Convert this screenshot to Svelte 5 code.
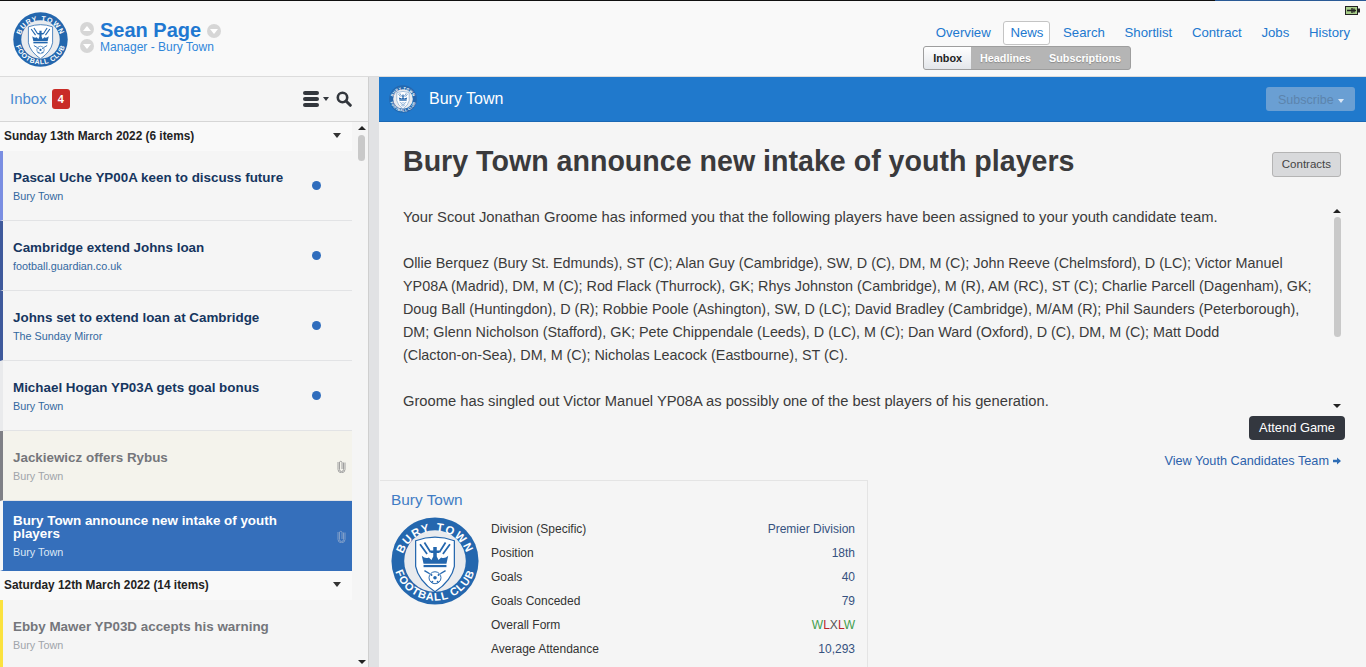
<script>
	const tabs = ['Overview', 'News', 'Search', 'Shortlist', 'Contract', 'Jobs', 'History'];
	const subTabs = ['Inbox', 'Headlines', 'Subscriptions'];

	const sunday = [
		{ title: 'Pascal Uche YP00A keen to discuss future', from: 'Bury Town', edge: '#7a8ee2', dot: true },
		{ title: 'Cambridge extend Johns loan', from: 'football.guardian.co.uk', edge: '#3f5a9c', dot: true },
		{ title: 'Johns set to extend loan at Cambridge', from: 'The Sunday Mirror', edge: '#3f5a9c', dot: true },
		{ title: 'Michael Hogan YP03A gets goal bonus', from: 'Bury Town', edge: '#e9eaec', dot: true },
		{ title: 'Jackiewicz offers Rybus', from: 'Bury Town', edge: '#7f8086', read: true, clip: true, tint: true },
		{ title: 'Bury Town announce new intake of youth players', from: 'Bury Town', edge: '#f7f7f7', selected: true, clip: true }
	];
	const saturday = [
		{ title: 'Ebby Mawer YP03D accepts his warning', from: 'Bury Town', edge: '#fbe23e', read: true }
	];

	const stats = [
		['Division (Specific)', 'Premier Division'],
		['Position', '18th'],
		['Goals', '40'],
		['Goals Conceded', '79'],
		['Overall Form', null],
		['Average Attendance', '10,293']
	];
	const form = [['W', '#3f9e4d'], ['L', '#b8262b'], ['X', '#555'], ['L', '#b8262b'], ['W', '#3f9e4d']];
</script>

{#snippet crest(id, size)}
	<svg class="crest" width={size} height={size} viewBox="0 0 100 100">
		<defs>
			<path id="{id}-top" d="M 12 54 A 38 38 0 0 1 88 54" />
			<path id="{id}-bot" d="M 3 48 A 47 47 0 0 0 97 48" />
		</defs>
		<circle cx="50" cy="50" r="49.5" fill="#2467ae" />
		<circle cx="50" cy="50" r="35" fill="#e9ebee" />
		<text class="ring" font-size="13" letter-spacing="1.8" text-anchor="middle">
			<textPath href="#{id}-top" startOffset="50%">BURY TOWN</textPath>
		</text>
		<text class="ring" font-size="12.5" letter-spacing="1" text-anchor="middle">
			<textPath href="#{id}-bot" startOffset="50%">FOOTBALL CLUB</textPath>
		</text>
		<path d="M28 27 Q50 19 72 27 L72 56 Q69 72 50 85 Q31 72 28 56 Z" fill="#fff" stroke="#2467ae" stroke-width="1.4" />
		<path d="M33 31 L41 42 M38 29 L45 40 M67 31 L59 42 M62 29 L55 40" stroke="#2467ae" stroke-width="2" />
		<path d="M37 53 L35 44 Q39 48 43 46 L46 49 L48 45 V41 H45 V38 H48 V34 H52 V38 H55 V41 H52 V45 L54 49 L57 46 Q61 48 65 44 L63 53 Z" fill="#2467ae" />
		<rect x="37" y="54.5" width="26" height="2.5" fill="#2467ae" />
		<path d="M38 61 L44 64.5 M62 61 L56 64.5" stroke="#2467ae" stroke-width="1.6" />
		<circle cx="50" cy="69" r="6.8" fill="#fff" stroke="#2467ae" stroke-width="1.1" />
		<circle cx="50" cy="69" r="2" fill="#2467ae" />
		<circle cx="46" cy="66" r="1.1" fill="#2467ae" />
		<circle cx="54" cy="66" r="1.1" fill="#2467ae" />
		<circle cx="47" cy="73.5" r="1.1" fill="#2467ae" />
		<circle cx="53" cy="73.5" r="1.1" fill="#2467ae" />
	</svg>
{/snippet}

{#snippet message(m)}
	<div class="item" class:read={m.read} class:tint={m.tint} class:selected={m.selected} style="border-left-color: {m.edge}">
		<div class="item-text">
			<div class="item-title">{m.title}</div>
			<div class="item-from">{m.from}</div>
		</div>
		{#if m.dot}<span class="dot"></span>{/if}
		{#if m.clip}
			<svg class="clip" width="9" height="14" viewBox="0 0 9 14">
				<path d="M6.5 3.5 V10.5 A2 2 0 0 1 2.5 10.5 V3 A1.5 1.5 0 0 1 5 3 V10 " fill="none" stroke="currentColor" stroke-width="1" />
				<path d="M8 3.5 V10.5 A3.5 3.2 0 0 1 1 10.5 V3" fill="none" stroke="currentColor" stroke-width="1" />
			</svg>
		{/if}
	</div>
{/snippet}

<div class="page">
	<div class="topline"></div>
	<header class="top">
		<div class="who">
			{@render crest('hd', 55)}
			<div class="arrows">
				<span class="round up"></span>
				<span class="round down"></span>
			</div>
			<div class="names">
				<div class="name-row">
					<span class="name">Sean Page</span>
					<span class="round down"></span>
				</div>
				<div class="role">Manager - Bury Town</div>
			</div>
		</div>
		<div class="right">
			<svg class="battery" width="15" height="9" viewBox="0 0 15 9">
				<rect x="0.5" y="0.5" width="12" height="8" fill="#a9cf8b" stroke="#222" />
				<rect x="13" y="2.5" width="2" height="4" fill="#222" />
				<path d="M2 4.5 H11 M7 2 V7 M9 2.5 V6.5" stroke="#222" stroke-width="1.4" />
			</svg>
			<nav class="tabs">
				{#each tabs as t}
					<span class="tab" class:active={t === 'News'}>{t}</span>
				{/each}
			</nav>
			<div class="subtabs">
				{#each subTabs as t}
					<span class="subtab" class:on={t === 'Inbox'}>{t}</span>
				{/each}
			</div>
		</div>
	</header>

	<main class="main">
		<aside class="side">
			<div class="side-head">
				<span class="inbox">Inbox</span>
				<span class="badge">4</span>
				<span class="side-tools">
					<span class="burger"><i></i><i></i><i></i></span>
					<span class="caret"></span>
					<svg class="search" width="16" height="16" viewBox="0 0 16 16">
						<circle cx="6.5" cy="6.5" r="4.7" fill="none" stroke="#33373d" stroke-width="2.6" />
						<path d="M10 10 L14.3 14.3" stroke="#33373d" stroke-width="3" stroke-linecap="round" />
					</svg>
				</span>
			</div>
			<div class="list">
				<div class="list-body">
					<div class="date"><span>Sunday 13th March 2022 (6 items)</span><span class="date-caret"></span></div>
					{#each sunday as m}
						{@render message(m)}
					{/each}
					<div class="date"><span>Saturday 12th March 2022 (14 items)</span><span class="date-caret"></span></div>
					{#each saturday as m}
						{@render message(m)}
					{/each}
				</div>
				<div class="bar">
					<span class="arrow-up"></span>
					<span class="thumb"></span>
					<span class="arrow-down"></span>
				</div>
			</div>
		</aside>

		<section class="content">
			<div class="club-bar">
				{@render crest('bar', 28)}
				<span class="club-name">Bury Town</span>
				<span class="subscribe">Subscribe<span class="sub-caret"></span></span>
			</div>
			<div class="article">
				<div class="headline">
					<h1>Bury Town announce new intake of youth players</h1>
					<span class="contracts">Contracts</span>
				</div>
				<div class="body-wrap">
					<div class="body-text">
						<p>Your Scout Jonathan Groome has informed you that the following players have been assigned to your youth candidate team.</p>
						<p class="roster">Ollie Berquez (Bury St. Edmunds), ST (C); Alan Guy (Cambridge), SW, D (C), DM, M (C); John Reeve (Chelmsford), D (LC); Victor Manuel YP08A (Madrid), DM, M (C); Rod Flack (Thurrock), GK; Rhys Johnston (Cambridge), M (R), AM (RC), ST (C); Charlie Parcell (Dagenham), GK; Doug Ball (Huntingdon), D (R); Robbie Poole (Ashington), SW, D (LC); David Bradley (Cambridge), M/AM (R); Phil Saunders (Peterborough), DM; Glenn Nicholson (Stafford), GK; Pete Chippendale (Leeds), D (LC), M (C); Dan Ward (Oxford), D (C), DM, M (C); Matt Dodd <span class="nowrap">(Clacton-on-Sea),</span> DM, M (C); Nicholas Leacock (Eastbourne), ST (C).</p>
						<p class="closing">Groome has singled out Victor Manuel YP08A as possibly one of the best players of his generation.</p>
					</div>
					<div class="text-bar">
						<span class="arrow-up"></span>
						<span class="text-thumb"></span>
						<span class="arrow-down"></span>
					</div>
				</div>
				<div class="actions"><span class="attend">Attend Game</span></div>
				<div class="link-row">
					<span class="view-link">View Youth Candidates Team</span>
					<svg width="8" height="8" viewBox="0 0 8 8"><path d="M0 2.8 H4 V0.5 L8 4 L4 7.5 V5.2 H0 Z" fill="#2f6db5" /></svg>
				</div>
				<div class="card">
					<div class="card-title">Bury Town</div>
					<div class="card-body">
						{@render crest('card', 88)}
						<div class="stats">
							{#each stats as [label, value]}
								<div class="stat">
									<span>{label}</span>
									{#if value}
										<span class="val">{value}</span>
									{:else}
										<span>{#each form as [l, c]}<span style="color: {c}">{l}</span>{/each}</span>
									{/if}
								</div>
							{/each}
						</div>
					</div>
				</div>
			</div>
		</section>
	</main>
</div>

<style>
	:global(body) {
		margin: 0;
		background: #f5f5f5;
		overflow: hidden;
	}
	.page {
		height: 667px;
		overflow: hidden;
		font-family: "Liberation Sans", Arial, sans-serif;
		color: #333;
		background: #f9f9f9;
		display: flex;
		flex-direction: column;
	}
	.topline {
		height: 1px;
		flex: none;
		background: linear-gradient(to right, #111 1215px, #2a5a96 1215px);
	}
	.top {
		height: 75px;
		flex: none;
		display: flex;
		justify-content: space-between;
		border-bottom: 1px solid #dcdcdc;
		box-sizing: content-box;
	}
	.who {
		display: flex;
		align-items: flex-start;
		padding: 11px 0 0 13px;
	}
	.crest {
		display: block;
		flex: none;
	}
	.ring {
		font-family: "Liberation Sans", Arial, sans-serif;
		font-weight: bold;
		fill: #fff;
	}
	.arrows {
		display: flex;
		flex-direction: column;
		gap: 3px;
		margin: 10px 0 0 12px;
	}
	.round {
		display: block;
		width: 14px;
		height: 14px;
		border-radius: 50%;
		background: #d6d6d6;
		position: relative;
	}
	.round::after {
		content: '';
		position: absolute;
		left: 3px;
		border-left: 4px solid transparent;
		border-right: 4px solid transparent;
	}
	.up::after {
		top: 4px;
		border-bottom: 5px solid #fff;
	}
	.down::after {
		top: 5px;
		border-top: 5px solid #fff;
	}
	.names {
		margin: 6px 0 0 6px;
	}
	.name-row {
		display: flex;
		align-items: center;
		gap: 6px;
	}
	.name {
		font-size: 20px;
		line-height: 24px;
		font-weight: bold;
		color: #1f78d1;
	}
	.name-row .round {
		margin-top: 2px;
	}
	.role {
		font-size: 12px;
		line-height: 14px;
		margin-top: -2px;
		color: #2f86d9;
	}
	.right {
		display: flex;
		flex-direction: column;
		align-items: flex-end;
		position: relative;
		padding: 20px 9px 0 0;
	}
	.battery {
		position: absolute;
		top: 5px;
		right: 6px;
	}
	.tabs {
		display: flex;
		gap: 5.7px;
	}
	.tab {
		font-size: 13.2px;
		line-height: 22px;
		padding: 0 6px;
		border: 1px solid transparent;
		border-radius: 3px;
		color: #2178cf;
	}
	.tab.active {
		border-color: #c4c4c4;
		background: #fff;
	}
	.subtabs {
		display: flex;
		align-self: flex-end;
		margin: 1px 226px 0 0;
		background: #b5b5b5;
		border: 1px solid #9e9e9e;
		border-radius: 3px;
	}
	.subtab {
		font-size: 10.8px;
		font-weight: bold;
		line-height: 22px;
		padding: 0 9px;
		color: #fff;
		text-shadow: 0 1px 1px #8a8a8a;
	}
	.subtab.on {
		color: #222;
		text-shadow: none;
		background: linear-gradient(#fff, #e3e6ea);
		border-radius: 2px 0 0 2px;
	}
	.main {
		flex: 1;
		min-height: 0;
		display: flex;
		background: #e1e2e4;
		gap: 10px;
	}
	.side {
		width: 368px;
		flex: none;
		display: flex;
		flex-direction: column;
		background: #f5f5f5;
		border-right: 1px solid #cfcfcf;
	}
	.side-head {
		height: 44px;
		flex: none;
		display: flex;
		align-items: center;
		padding: 0 16px 0 10px;
		border-bottom: 1px solid #d6d6d6;
	}
	.inbox {
		font-size: 15px;
		margin-top: -2px;
		color: #4a8bd2;
	}
	.badge {
		margin-left: 5px;
		width: 18px;
		height: 20px;
		line-height: 20px;
		border-radius: 3px;
		background: #c92c27;
		color: #fff;
		font-size: 11px;
		font-weight: bold;
		text-align: center;
	}
	.side-tools {
		margin-left: auto;
		display: flex;
		align-items: center;
	}
	.burger {
		display: flex;
		flex-direction: column;
		gap: 2px;
		width: 16px;
	}
	.burger i {
		display: block;
		height: 4px;
		border-radius: 2px;
		background: #33373d;
	}
	.caret {
		margin: 0 7px 0 4px;
		border-left: 3.5px solid transparent;
		border-right: 3.5px solid transparent;
		border-top: 4px solid #33373d;
	}
	.list {
		flex: 1;
		min-height: 0;
		display: flex;
		position: relative;
	}
	.list-body {
		width: 352px;
		flex: none;
		overflow: hidden;
	}
	.bar {
		flex: 1;
		display: flex;
		flex-direction: column;
		align-items: center;
		padding: 4px 0 0 3px;
	}
	.thumb {
		width: 7px;
		height: 26px;
		margin-top: 5px;
		border-radius: 4px;
		background: #c9c9c9;
	}
	.arrow-up, .arrow-down {
		display: block;
		width: 0;
		border-left: 4px solid transparent;
		border-right: 4px solid transparent;
	}
	.arrow-up {
		border-bottom: 4px solid #222;
	}
	.arrow-down {
		border-top: 4px solid #222;
		margin-top: auto;
		margin-bottom: 3px;
	}
	.date {
		height: 29px;
		box-sizing: border-box;
		padding: 0 11px 2px 4px;
		display: flex;
		align-items: center;
		justify-content: space-between;
		background: #f9f9f9;
		font-size: 11.85px;
		font-weight: bold;
		color: #222;
	}
	.date-caret {
		border-left: 4px solid transparent;
		border-right: 4px solid transparent;
		border-top: 5px solid #333;
	}
	.item {
		height: 70px;
		box-sizing: border-box;
		display: flex;
		align-items: center;
		padding: 2px 10px 0 10px;
		border-left: 3px solid;
		border-bottom: 1px solid #e2e3e5;
		background: #f5f5f5;
	}
	.item-text {
		flex: 1;
		min-width: 0;
		max-width: 300px;
		margin-right: auto;
	}
	.item-title {
		font-size: 13.4px;
		line-height: 13px;
		font-weight: bold;
		color: #16365f;
	}
	.item-from {
		font-size: 10.8px;
		line-height: 13px;
		margin-top: 6px;
		color: #33689f;
	}
	.dot {
		width: 9px;
		height: 9px;
		flex: none;
		margin: -2px 21px 0 0;
		border-radius: 50%;
		background: #2f6dbd;
	}
	.clip {
		flex: none;
		margin: -2px -4px 0 0;
		color: #a0a0a0;
	}
	.read .item-title {
		color: #74767b;
	}
	.read .item-from {
		color: #a0a4aa;
	}
	.tint {
		background: #f4f3ec;
	}
	.selected {
		background: #356fbb;
		border-bottom-color: #356fbb;
	}
	.selected .item-title {
		color: #fff;
	}
	.selected .item-from {
		color: #dce8f5;
	}
	.selected .clip {
		color: #7f9ec9;
	}
	.content {
		flex: 1;
		min-width: 0;
		display: flex;
		flex-direction: column;
		background: #f5f5f5;
	}
	.club-bar {
		height: 45px;
		flex: none;
		box-sizing: border-box;
		display: flex;
		align-items: center;
		padding: 0 11px 0 10px;
		background: #2079cc;
		border-bottom: 1px solid #1a68b4;
	}
	.club-name {
		margin-left: 12px;
		font-size: 16px;
		color: #fff;
	}
	.subscribe {
		margin-left: auto;
		width: 89px;
		height: 24px;
		line-height: 26px;
		box-sizing: border-box;
		padding-left: 12px;
		border-radius: 3px;
		background: #6a9fd3;
		color: #5c84ad;
		font-size: 12.5px;
	}
	.sub-caret {
		display: inline-block;
		margin-left: 4px;
		vertical-align: middle;
		border-left: 3.5px solid transparent;
		border-right: 3.5px solid transparent;
		border-top: 4px solid #dce8f5;
	}
	.article {
		flex: 1;
		min-height: 0;
		overflow: hidden;
	}
	.headline {
		display: flex;
		justify-content: space-between;
		align-items: center;
		padding: 22px 25px 0 24px;
		height: 62px;
		box-sizing: content-box;
	}
	h1 {
		margin: 0;
		font-size: 28.6px;
		line-height: 34px;
		color: #3a3a3c;
		align-self: flex-start;
	}
	.contracts {
		font-size: 11.5px;
		line-height: 23px;
		padding: 0 9px;
		margin-top: -22px;
		color: #444;
		background: #d8d9db;
		border: 1px solid #b4b4b4;
		border-radius: 3px;
	}
	.body-wrap {
		display: flex;
		height: 208px;
		padding: 0 25px 0 24px;
	}
	.body-text {
		flex: 1;
		min-width: 0;
		overflow: hidden;
		font-size: 14.8px;
		line-height: 23px;
		color: #3b3b3b;
	}
	.body-text p {
		margin: 0 0 23px;
	}
	.body-text .roster {
		font-size: 14.36px;
	}
	.body-text .closing {
		font-size: 14.72px;
	}
	.nowrap {
		white-space: nowrap;
	}
	.text-bar {
		width: 8px;
		flex: none;
		margin: 3px 0 3px 16px;
		display: flex;
		flex-direction: column;
		align-items: center;
	}
	.text-thumb {
		width: 7px;
		height: 120px;
		margin-top: 4px;
		border-radius: 4px;
		background: #c9c9c9;
	}
	.actions {
		display: flex;
		justify-content: flex-end;
		padding: 2px 21px 0 0;
	}
	.attend {
		font-size: 12.9px;
		line-height: 24px;
		padding: 0 10px;
		border-radius: 4px;
		background: #33373f;
		color: #fff;
	}
	.link-row {
		display: flex;
		justify-content: flex-end;
		align-items: center;
		gap: 4px;
		padding: 14px 25px 0 0;
		height: 14px;
		box-sizing: content-box;
	}
	.view-link {
		font-size: 12.7px;
		color: #2c62ab;
	}
	.card {
		width: 488px;
		height: 200px;
		box-sizing: border-box;
		margin: 12px 0 0 1px;
		padding: 10px 12px 10px 11px;
		background: #f5f5f5;
		border: 1px solid #e4e4e4;
		border-left: none;
	}
	.card-title {
		font-size: 15.4px;
		line-height: 18px;
		color: #3f7cc4;
	}
	.card-body {
		display: flex;
		gap: 12px;
		margin-top: 8px;
	}
	.stats {
		flex: 1;
	}
	.stat {
		display: flex;
		justify-content: space-between;
		font-size: 12px;
		line-height: 24px;
		color: #333;
	}
	.val {
		color: #36527f;
	}
</style>
